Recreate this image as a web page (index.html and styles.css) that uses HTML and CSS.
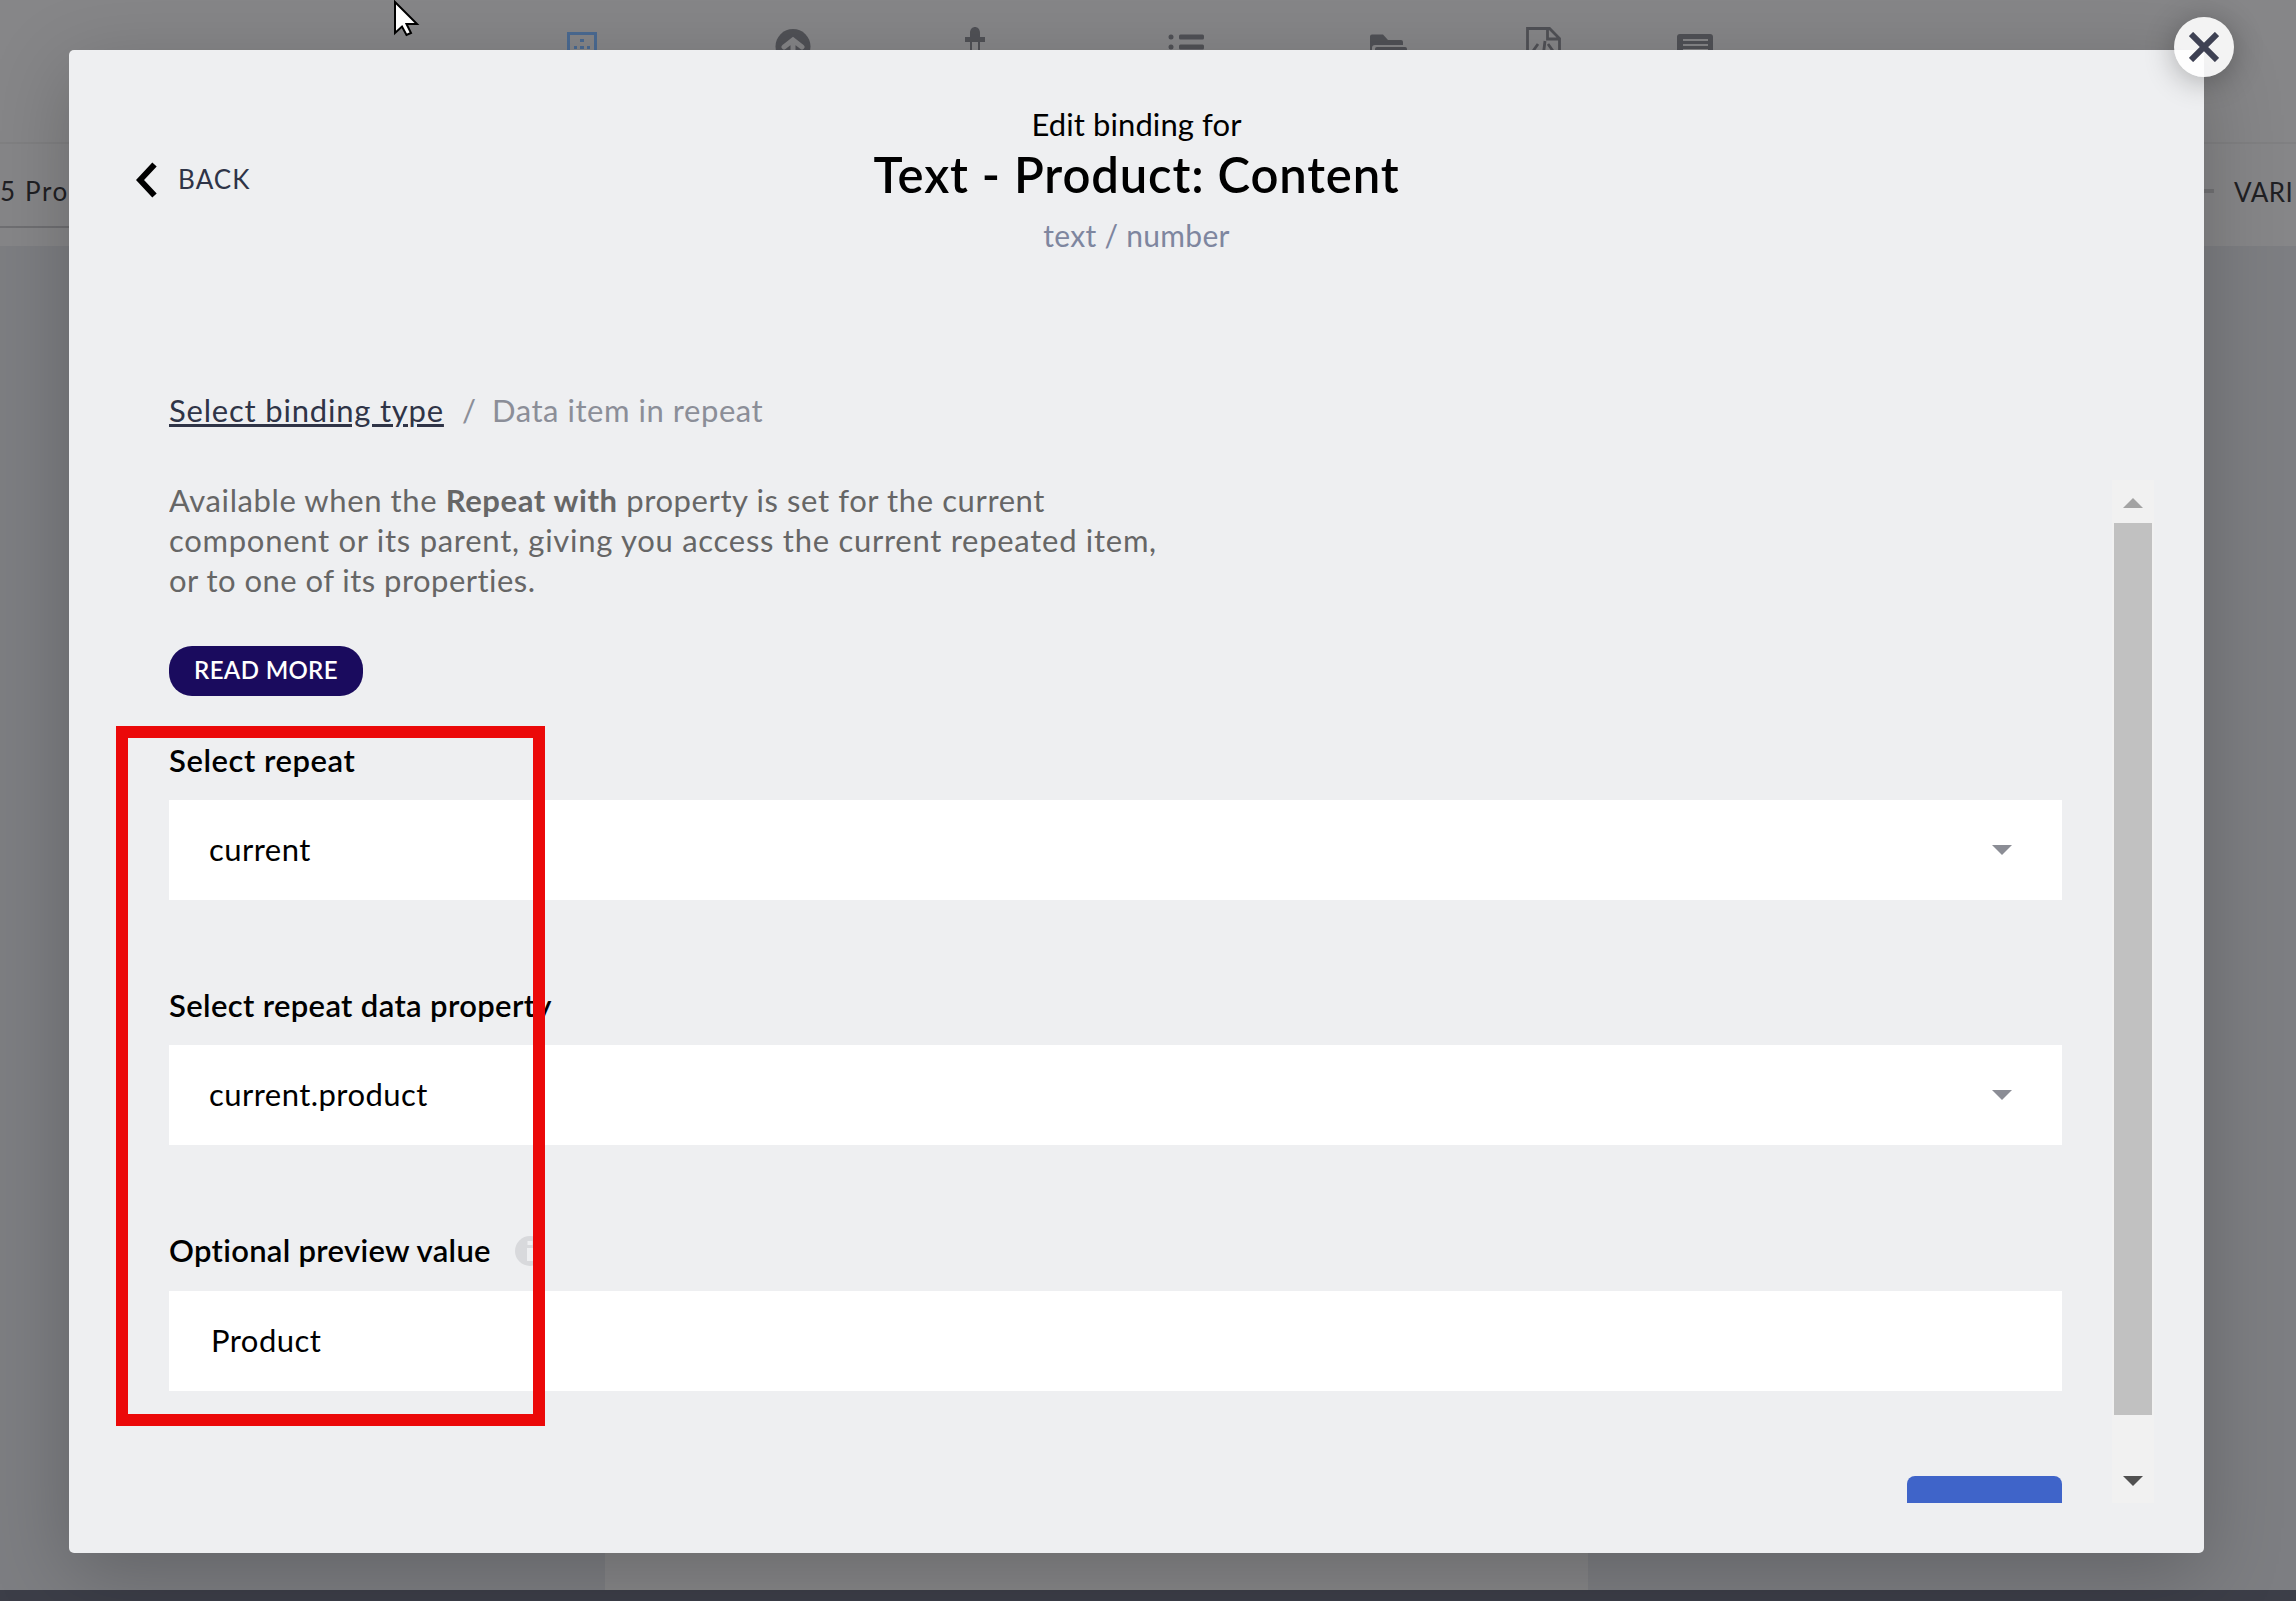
FILE: index.html
```html
<!DOCTYPE html>
<html lang="en">
<head>
<meta charset="utf-8">
<title>Edit binding</title>
<link rel="stylesheet" href="styles.css">
</head>
<body>
<div class="editor">
  <header class="toolbar">
    <svg class="toolbar-icons" viewBox="0 0 2296 60" width="2296" height="60">
      <g fill="#4a6a92">
        <path d="M567 32h30v30h-30zM570 35v24h24V35z" fill-rule="evenodd"/>
        <path d="M580 39h4v3h-4zM574 46h3v3h-3zM580 46h4v3h-4zM587 46h3v3h-3z"/>
      </g>
      <circle cx="793" cy="46.500" r="17.500" fill="#505156"/>
      <path d="M793 60V42M784 47l9-7 9 7" fill="none" stroke="#858587" stroke-width="5" stroke-linecap="round"/>
      <g fill="#505156">
        <path d="M970 37v-4c0-8 10-8 10 0v4h5v5h-20v-5zM970 42h2v10h-2zM978 42h2v10h-2z"/>
        <circle cx="1171" cy="37" r="2.500"/><circle cx="1171" cy="47" r="2.500"/>
        <rect x="1179" y="34.500" width="25" height="5" rx="1.500"/><rect x="1179" y="44.500" width="25" height="5" rx="1.500"/>
        <path d="M1370 60V36.500q0-2 2-2h11l5 5.500h13q2 0 2 2v3h-28q-3 0-3 3v12zM1375 60V49q0-2 2-2h28q2 0 2 2v11z"/>
        <path d="M1680 34h30q3 0 3 3v25h-36V37q0-3 3-3zM1683 39v2h25v-2zM1683 44v2h25v-2zM1683 49v2h25v-2z" fill-rule="evenodd"/>
      </g>
      <path d="M1527.500 60V28.500h22l10 10V60M1547.500 28v11h12M1538 44l-5 7M1545 41l-1.500 12M1548 44l5 7" fill="none" stroke="#505156" stroke-width="2.800"/>
    </svg>
  </header>
  <div class="subbar"><span class="crumb">5 Pro</span><span class="vari"><i class="dash"></i><span class="vari-text">VARI</span></span></div>
  <main class="canvas"><div class="sheet"></div></main>
  <footer class="statusbar"></footer>
</div>

<section class="modal">
  <button class="back"><svg width="22" height="36" viewBox="0 0 22 36"><path d="M18.500 2.500L4 18l14.500 15.500" fill="none" stroke="#000" stroke-width="6"/></svg><span class="back-text">BACK</span></button>
  <header class="head">
    <div class="head-kicker">Edit binding for</div>
    <h1 class="head-title">Text - Product: Content</h1>
    <div class="head-type">text / number</div>
  </header>
  <nav class="path"><a class="path-link">Select binding type</a><span class="path-sep">/</span><span class="path-here">Data item in repeat</span></nav>
  <div class="scroller">
    <div class="content">
      <p class="intro">Available when the <b>Repeat with</b> property is set for the current<br><span class="intro-wide">component or its parent, giving you access the current repeated item,</span><br><span class="intro-tight">or to one of its properties.</span></p>
      <a class="more">READ MORE</a>
      <div class="field"><label class="label label-short">Select repeat</label><div class="box"><span>current</span><i class="caret"></i></div></div>
      <div class="field"><label class="label">Select repeat data property</label><div class="box"><span>current.product</span><i class="caret"></i></div></div>
      <div class="field field-last"><label class="label"><span>Optional preview value</span><svg class="info" width="30" height="30" viewBox="0 0 30 30"><circle cx="15" cy="15" r="15" fill="#d8d9dc"/><path d="M12.500 5h5v4h-5zM12 12h6v13h-6z" fill="#eeeff1"/></svg></label><div class="box box-text"><span>Product</span></div></div>
      <button class="save"></button>
    </div>
    <div class="scrollbar"><i class="arrow-up"></i><i class="thumb"></i><i class="arrow-down"></i></div>
  </div>
</section>
<button class="close"><svg width="30" height="30" viewBox="0 0 30 30"><path d="M2 2l26 26M28 2L2 28" stroke="#3e4153" stroke-width="6"/></svg></button>
<div class="highlight"></div>
<svg class="cursor" width="28" height="38" viewBox="0 0 28 38"><path d="M2 2v31l7-6.500 4.500 8.500 4.500-2-4.500-9h10.500z" fill="#fff" stroke="#000" stroke-width="2"/></svg>
</body>
</html>
```
FILE: styles.css
```css
* { box-sizing: border-box; }
body { margin: 0; width: 2296px; height: 1601px; overflow: hidden; position: relative; font-family: Lato, "Liberation Sans", sans-serif; font-size: 31px; line-height: 40px; color: #000; }
button { border: 0; padding: 0; font: inherit; }
.editor { height: 1601px; display: flex; flex-direction: column; background: #868688; }
.toolbar { height: 144px; border-bottom: 2px solid #808082; }
.toolbar-icons { display: block; }
.subbar { height: 102px; display: flex; justify-content: space-between; font-size: 26px; color: #1f2023; line-height: 96px; }
.crumb { width: 69px; height: 84px; overflow: hidden; white-space: nowrap; letter-spacing: 1.6px; line-height: 94px; border-bottom: 2px solid #6f6f72; }
.vari { width: 92px; display: flex; overflow: hidden; letter-spacing: .5px; }
.dash { width: 10px; height: 4px; margin: 45px 20px 0 0; background: #727274; }
.canvas { flex: 1; background: #7d7e82; padding-left: 605px; }
.sheet { width: 983px; height: 100%; background: #868688; }
.statusbar { height: 11px; background: #3c3e48; }
.modal { position: absolute; left: 69px; top: 50px; width: 2135px; height: 1503px; border-radius: 5px; background: #eeeff1; box-shadow: 0 20px 80px rgba(0, 0, 0, .22); }
.back { position: absolute; left: 67px; top: 110px; display: flex; align-items: center; gap: 20px; background: none; color: #2f3447; font-size: 26px; letter-spacing: 1.1px; }
.back-text { position: relative; top: -1px; }
.head { padding-top: 54px; height: 340px; text-align: center; }
.head-kicker { letter-spacing: .1px; }
.head-title { margin: 2px 0 13px; font-size: 49px; line-height: 56px; font-weight: 600; letter-spacing: .85px; }
.head-type { color: #7e869f; font-size: 30px; letter-spacing: .3px; }
.path { height: 90px; padding-left: 100px; display: flex; color: #8b8e98; }
.path-link { color: #2f3447; letter-spacing: .8px; text-decoration: underline; text-decoration-thickness: 3px; }
.path-sep { margin: 0 16px 0 18px; }
.path-here { letter-spacing: .55px; }
.scroller { height: 1023px; overflow: hidden; display: flex; margin-left: 100px; }
.content { width: 1893px; }
.intro { margin: 0 0 46px; color: #666; letter-spacing: .6px; white-space: nowrap; }
.intro-wide { letter-spacing: .72px; }
.intro-tight { letter-spacing: .46px; }
.more { display: flex; justify-content: center; width: 194px; height: 50px; border-radius: 23px; background: #1a0b5e; color: #fff; font-size: 24px; font-weight: 600; line-height: 48px; letter-spacing: .35px; margin-bottom: 44px; }
.field { height: 245px; }
.label { display: flex; height: 60px; font-weight: 600; letter-spacing: .35px; }
.label-short { letter-spacing: .55px; }
.info { margin: 6px 0 0 24px; }
.box { height: 100px; padding: 0 50px 2px 40px; background: #fff; display: flex; justify-content: space-between; align-items: center; letter-spacing: .45px; }
.field-last .label { height: 61px; letter-spacing: .3px; }
.box-text { padding-left: 42px; }
.caret { margin-top: 2px; border: 10px solid transparent; border-top-color: #8b8d95; border-bottom: 0; }
.save { display: block; margin: 1px 0 0 auto; width: 155px; height: 80px; border-radius: 8px; background: #3f64c9; }
.scrollbar { width: 42px; height: 1023px; margin-left: 50px; background: #f1f1f1; display: flex; flex-direction: column; align-items: center; }
.arrow-up { margin: 18px 0 15px; border: 10px solid transparent; border-bottom-color: #a3a3a3; border-top: 0; }
.thumb { width: 38px; height: 892px; background: #c1c1c1; }
.arrow-down { margin-top: 61px; border: 10px solid transparent; border-top-color: #505050; border-bottom: 0; }
.close { position: absolute; left: 2173.5px; top: 17px; width: 60px; height: 60px; border-radius: 50%; background: rgba(255, 255, 255, .9); box-shadow: 0 4px 30px rgba(0, 0, 0, .3); display: flex; align-items: center; justify-content: center; }
.highlight { position: absolute; left: 116px; top: 726px; width: 429px; height: 700px; border: 12px solid #eb0909; }
.cursor { position: absolute; left: 393px; top: 0; }
```
